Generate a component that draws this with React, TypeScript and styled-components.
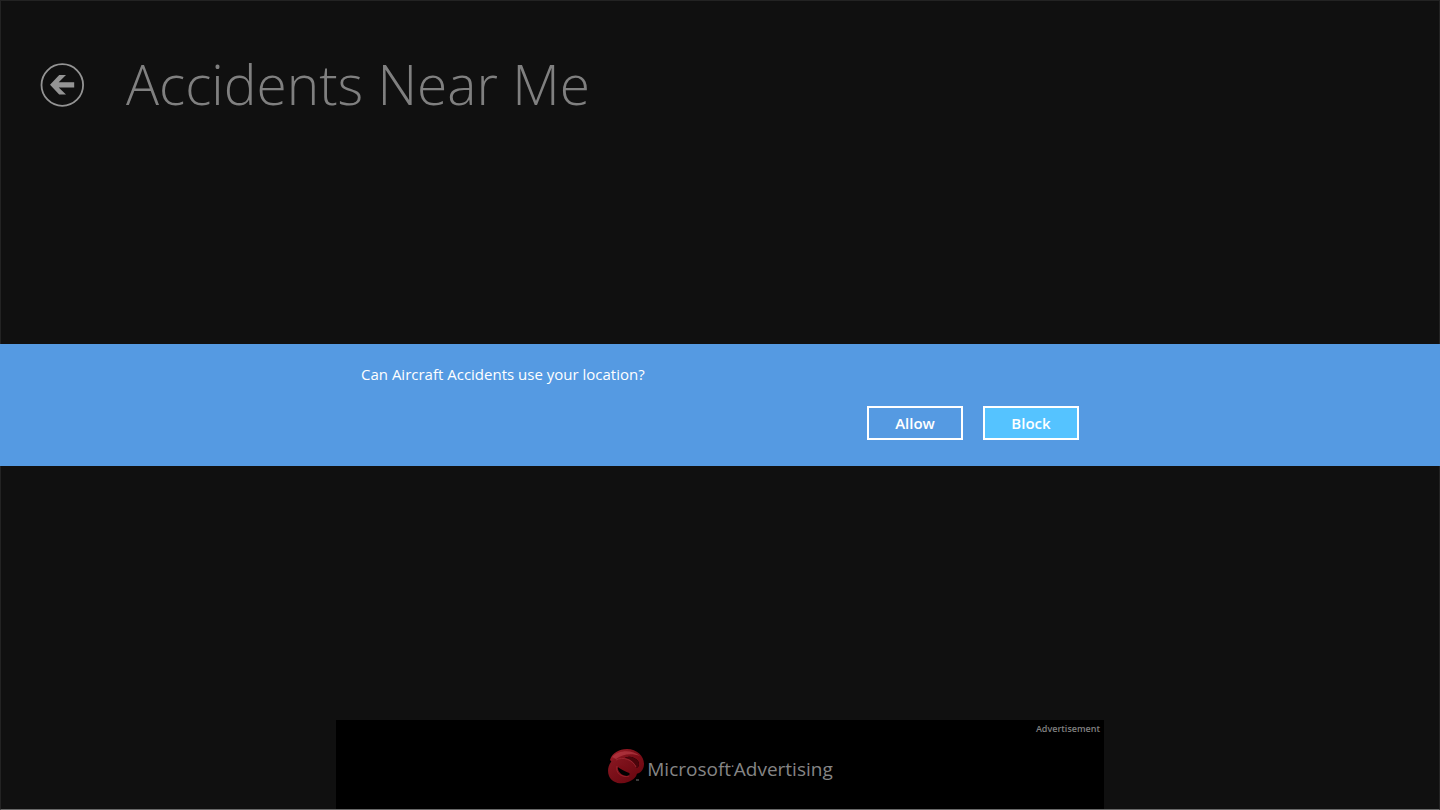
import React from "react";
import styled, { createGlobalStyle } from "styled-components";

const GlobalStyle = createGlobalStyle`
  *, *::before, *::after { box-sizing: border-box; }
  body {
    margin: 0;
    background: #101010;
    color: #808080;
    font-family: "Open Sans", "Noto Sans", sans-serif;
  }
`;

const Page = styled.div`
  min-height: 100vh;
  display: flex;
  flex-direction: column;
  justify-content: space-between;
  border: 1px solid #232323;
  border-bottom-color: #696969;
`;

const Header = styled.header`
  display: flex;
  align-items: center;
  gap: 42px;
  padding: 44px 39px 0;
`;

const BackButton = styled.button`
  width: 44px;
  height: 44px;
  padding: 0;
  border: 0;
  background: none;
  color: #949494;
  cursor: pointer;

  svg { display: block; }
`;

const Title = styled.h1`
  margin: 0;
  padding-bottom: 2px;
  font-size: 55px;
  line-height: 78px;
  font-weight: 300;
`;

const Overlay = styled.div`
  position: fixed;
  inset: 0;
  display: flex;
  align-items: center;
`;

const Prompt = styled.section`
  width: 100%;
  padding: 19px 0 26px;
  background: #559ae2;
  color: #fff;
`;

const PromptContent = styled.div`
  width: 50%;
  margin: 0 auto;
  padding: 0 1px;
`;

const Question = styled.p`
  margin: 0 0 21px;
  font-size: 15px;
  line-height: 22px;
`;

const Actions = styled.div`
  display: flex;
  justify-content: flex-end;
  gap: 20px;
`;

const ActionButton = styled.button<{ $primary?: boolean }>`
  width: 96px;
  height: 34px;
  padding: 0;
  border: 2px solid #fff;
  background: ${({ $primary }) => ($primary ? "#55c3ff" : "transparent")};
  color: #fff;
  font: 600 15px/22px "Open Sans", "Noto Sans", sans-serif;
  cursor: pointer;
`;

const AdBanner = styled.aside`
  width: 100%;
  max-width: 768px;
  height: 89px;
  margin: 0 auto;
  padding: 2px 4px 0;
  background: #000;
`;

const AdLabel = styled.div`
  font-size: 9px;
  line-height: 14px;
  font-weight: 600;
  text-align: right;
`;

const AdLink = styled.a`
  display: flex;
  justify-content: center;
  align-items: center;
  gap: 2px;
  margin-top: 12px;
  color: #858585;
  text-decoration: none;
`;

const AdName = styled.span`
  display: flex;
  padding-top: 4px;
  font-size: 19px;
  line-height: 34px;
`;

const Trademark = styled.span`
  font-size: 7px;
  line-height: 30px;
`;

function BackIcon() {
  return (
    <svg width="44" height="44" viewBox="0 0 44 44" aria-hidden="true">
      <circle cx="22.3" cy="22" r="20.8" fill="none" stroke="currentColor" strokeWidth="1.8" />
      <path d="M10 21.8 19.2 12H26L18.7 19.2H34.2V24.4H18.7L26 31.6H19.2Z" fill="currentColor" />
    </svg>
  );
}

function AdLogo() {
  return (
    <svg width="38" height="38" viewBox="0 0 38 38" aria-hidden="true">
      <defs>
        <linearGradient id="upperRing" x1="0" y1="0" x2="1" y2="1">
          <stop offset="0" stopColor="#a5222c" />
          <stop offset="0.4" stopColor="#80101a" />
          <stop offset="1" stopColor="#6c0710" />
        </linearGradient>
        <linearGradient id="lowerRing" x1="0" y1="0" x2="1" y2="1">
          <stop offset="0" stopColor="#8a1822" />
          <stop offset="1" stopColor="#66050e" />
        </linearGradient>
      </defs>
      <path
        fillRule="evenodd"
        fill="url(#upperRing)"
        d="M3 12C5 5 12 1 20 1C30 1 37 8 37 16C37 22 33 26 28 26C20 26 9 19 3 12ZM17 11C18 16 23 20 28 20C32 20 33 16 31 13C28 9 20 7 17 11Z"
      />
      <path d="M17 11C20 7 28 9 31 13C33 16 32 20 28 20C23 20 18 16 17 11Z" fill="#4b050b" />
      <path
        fillRule="evenodd"
        fill="url(#lowerRing)"
        d="M6 12C1 16 0 23 2 28C5 35 14 37 21 34C27 32 31 28 30 22C29 15 23 10 16 10C12 10 8 10 6 12ZM12 18C9 20 12 25 16 27C20 29 24 28 22 24C20 19 15 16 12 18Z"
      />
      <path d="M5 9C11 2 25 1 33 8C25 5 15 6 9 11Z" fill="#b53a44" opacity="0.7" />
      <path d="M9 12C16 8 26 12 29 19" fill="none" stroke="#a02a34" strokeWidth="0.8" />
      <path d="M10 18C8 25 15 30 22 28" fill="none" stroke="#a32630" strokeWidth="0.8" />
      <path d="M29 32H32" stroke="#777" strokeWidth="1" />
    </svg>
  );
}

export default function App() {
  return (
    <>
      <GlobalStyle />
      <Page>
        <Header>
          <BackButton type="button" aria-label="Back">
            <BackIcon />
          </BackButton>
          <Title>Accidents Near Me</Title>
        </Header>
        <AdBanner aria-label="Advertisement">
          <AdLabel>Advertisement</AdLabel>
          <AdLink href="#advertising">
            <AdLogo />
            <AdName>
              Microsoft<Trademark>•</Trademark>Advertising
            </AdName>
          </AdLink>
        </AdBanner>
      </Page>
      <Overlay>
        <Prompt role="dialog" aria-modal="true" aria-labelledby="location-question">
          <PromptContent>
            <Question id="location-question">Can Aircraft Accidents use your location?</Question>
            <Actions>
              <ActionButton type="button">Allow</ActionButton>
              <ActionButton type="button" $primary>Block</ActionButton>
            </Actions>
          </PromptContent>
        </Prompt>
      </Overlay>
    </>
  );
}
